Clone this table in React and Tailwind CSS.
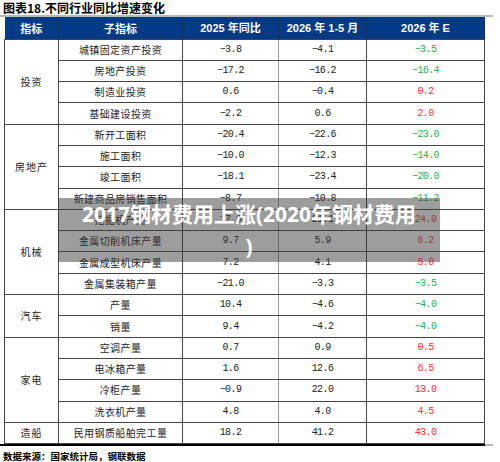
import React from 'react';

const GREEN = 'text-[#1fae4c]';
const RED = 'text-[#ff3030]';

const grupos = [
  {
    nombre: '投资',
    filas: [
      ['城镇固定资产投资', '-3.8', '-4.1', '-3.5'],
      ['房地产投资', '-17.2', '-16.2', '-16.4'],
      ['制造业投资', '0.6', '-0.4', '0.2'],
      ['基础建设投资', '-2.2', '0.6', '2.0'],
    ],
  },
  {
    nombre: '房地产',
    filas: [
      ['新开工面积', '-20.4', '-22.6', '-23.0'],
      ['施工面积', '-10.0', '-12.3', '-14.0'],
      ['竣工面积', '-18.1', '-23.4', '-20.0'],
      ['新建商品房销售面积', '-8.7', '-10.8', '-11.2'],
    ],
  },
  {
    nombre: '机械',
    filas: [
      ['挖掘机产量', '17.0', '21.1', '24.0'],
      ['金属切削机床产量', '9.7', '5.9', '6.2'],
      ['金属成型机床产量', '7.2', '4.1', '5.0'],
      ['金属集装箱产量', '-21.0', '-3.3', '-3.5'],
    ],
  },
  {
    nombre: '汽车',
    filas: [
      ['产量', '10.4', '-4.6', '-4.0'],
      ['销量', '9.4', '-4.2', '-4.0'],
    ],
  },
  {
    nombre: '家电',
    filas: [
      ['空调产量', '0.7', '0.9', '0.5'],
      ['电冰箱产量', '1.6', '12.6', '6.5'],
      ['冷柜产量', '-0.9', '22.0', '13.0'],
      ['洗衣机产量', '4.8', '4.0', '4.5'],
    ],
  },
  {
    nombre: '造船',
    filas: [['民用钢质船舶完工量', '18.2', '41.2', '43.0']],
  },
];

const num = (v) => v.replace('-', '−');

export default function App() {
  return (
    <div className="w-[500px] h-[462px] bg-white relative overflow-hidden font-['Noto_Sans_CJK_SC',sans-serif] text-[#222]">
      <div className="h-[15px] pl-[3px] text-[12px] leading-[15px] font-bold text-black">图表18.不同行业同比增速变化</div>
      <div className="w-[493px] h-[2px] bg-[#b8b8b8]"></div>

      <table className="ml-[4px] w-[480px] table-fixed border-collapse">
        <colgroup>
          <col className="w-[54px]" />
          <col className="w-[124px]" />
          <col className="w-[96px]" />
          <col className="w-[88px]" />
          <col className="w-[118px]" />
        </colgroup>
        <thead>
          <tr className="h-[22px] bg-[#033a86] text-white text-[11px] font-bold">
            <th className="border-r border-[#1d2f55] font-bold">指标</th>
            <th className="border-r border-[#1d2f55] font-bold">子指标</th>
            <th className="border-r border-[#1d2f55] font-['Liberation_Sans','Noto_Sans_CJK_SC',sans-serif]">2025 年同比</th>
            <th className="border-r border-[#1d2f55] font-['Liberation_Sans','Noto_Sans_CJK_SC',sans-serif]">2026 年 1-5 月</th>
            <th className="border-r border-[#1d2f55] font-['Liberation_Sans','Noto_Sans_CJK_SC',sans-serif]">2026 年 E</th>
          </tr>
        </thead>
        <tbody>
          {grupos.map((g) =>
            g.filas.map((f, i) => {
              const e = parseFloat(f[3]);
              return (
                <tr key={g.nombre + i} className="h-[21.3px]">
                  {i === 0 && (
                    <td rowSpan={g.filas.length} className="border border-[#444] text-center text-[10px] tracking-[1px]">
                      {g.nombre}
                    </td>
                  )}
                  <td className="border border-[#444] text-center text-[10px] tracking-[0.4px] leading-none">{f[0]}</td>
                  <td className="border border-[#444] border-r-[#999] text-center text-[10px] leading-none font-['Liberation_Mono',monospace] tracking-[-0.6px]">{num(f[1])}</td>
                  <td className="border border-[#444] text-center text-[10px] leading-none font-['Liberation_Mono',monospace] tracking-[-0.6px]">{num(f[2])}</td>
                  <td className={`border border-[#444] text-center text-[10px] leading-none font-['Liberation_Mono',monospace] tracking-[-0.6px] ${e < 0 ? GREEN : RED}`}>{num(f[3])}</td>
                </tr>
              );
            })
          )}
        </tbody>
      </table>

      <div className="flex">
        <div className="w-[485px] h-[2px] bg-black"></div>
        <div className="w-[8px] h-[2px] bg-[#b8b8b8]"></div>
      </div>

      <div className="mt-[3px] pl-[3px] text-[9.5px] font-bold text-black leading-[14px]">
        数据来源：国家统计局，钢<span className="border-b-2 border-[#a8c0e8]">联数据</span>
      </div>

      <div className="absolute left-[58px] top-[198px] w-[382px] h-[64px] bg-[rgba(60,60,60,0.5)] text-white text-[21px] font-bold leading-[32px] text-center font-['Noto_Sans','Noto_Sans_CJK_SC',sans-serif]">
        2017钢材费用上涨(2020年钢材费用
        <br />)
      </div>
    </div>
  );
}
